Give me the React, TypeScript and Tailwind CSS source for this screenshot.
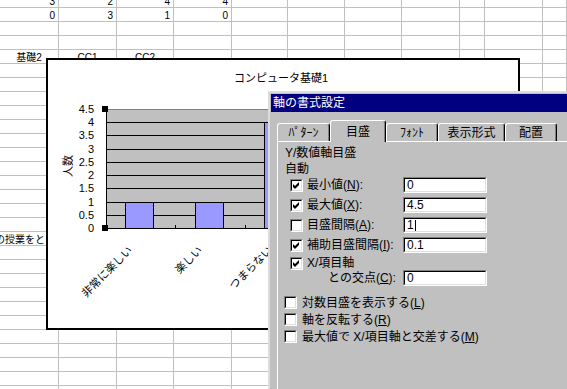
import clsx from "clsx";

const FONT = "font-['Liberation_Sans','Noto_Sans_CJK_JP',sans-serif]";

// column widths include the 1px right grid line
const COLS = [
    "w-[59px]",
    "w-[58px]",
    "w-[57px]",
    "w-[58px]",
    "w-[56px]",
    "w-[57px]",
    "w-[57px]",
    "w-[58px]",
    "w-[25px]",
    "w-[58px]",
    "flex-1",
];

type Cell = { text: string; align: "r" | "c" | "l" };

const CELLS: Record<string, Cell> = {
    "0-0": { text: "3", align: "r" },
    "0-1": { text: "2", align: "r" },
    "0-2": { text: "4", align: "r" },
    "0-3": { text: "4", align: "r" },
    "1-0": { text: "0", align: "r" },
    "1-1": { text: "3", align: "r" },
    "1-2": { text: "1", align: "r" },
    "1-3": { text: "0", align: "r" },
    "4-0": { text: "基礎2", align: "c" },
    "4-1": { text: "CC1", align: "c" },
    "4-2": { text: "CC2", align: "c" },
};

function Sheet() {
    const rows = Array.from({ length: 29 }, (_, i) => i);
    return (
        <div className="-mt-[6px]">
            {rows.map((r) => (
                <div key={r} className="flex h-[14px] border-b border-[#c0c0c0]">
                    {COLS.map((w, c) => {
                        const cell = CELLS[`${r}-${c}`];
                        return (
                            <div
                                key={c}
                                className={clsx(
                                    "h-full shrink-0 border-r border-[#c0c0c0] px-[3px] pt-[1px] text-[10px] leading-[14px] whitespace-nowrap text-black",
                                    w,
                                    cell?.align === "r" && "text-right",
                                    cell?.align === "c" && "text-center"
                                )}
                            >
                                {cell?.text}
                                {r === 17 && c === 0 && (
                                    <span className="-ml-[8px] block">の授業をとった</span>
                                )}
                            </div>
                        );
                    })}
                </div>
            ))}
        </div>
    );
}

function Chart() {
    const bottom = 168;
    const unit = 119 / 4.5;
    const ticks = [0, 0.5, 1, 1.5, 2, 2.5, 3, 3.5, 4, 4.5];
    const bars = [
        { x: 77, v: 1 },
        { x: 147, v: 1 },
        { x: 216, v: 4 },
    ];
    const cats = [
        { x: 85, label: "非常に楽しい" },
        { x: 155, label: "楽しい" },
        { x: 225, label: "つまらない" },
    ];

    return (
        <div className="absolute left-[46px] top-[58px] h-[272px] w-[474px] border-2 border-black bg-white">
            <svg
                width="470"
                height="268"
                className="block"
                fontFamily="'Liberation Sans','Noto Sans CJK JP',sans-serif"
                shapeRendering="crispEdges"
            >
                <text x="233" y="22" fontSize="11" textAnchor="middle">
                    コンピュータ基礎1
                </text>

                {/* plot area */}
                <rect x="58.5" y="49.5" width="320" height="119" fill="#c0c0c0" stroke="#808080" />
                {ticks.slice(1, -1).map((t) => {
                    const y = Math.round(bottom - t * unit) + 0.5;
                    return <line key={t} x1="58" x2="380" y1={y} y2={y} stroke="#000" />;
                })}

                {bars.map((b) => {
                    const top = Math.round(bottom - b.v * unit);
                    return (
                        <rect
                            key={b.x}
                            x={b.x + 0.5}
                            y={top + 0.5}
                            width="28"
                            height={bottom - top}
                            fill="#9999ff"
                            stroke="#000"
                        />
                    );
                })}

                {/* axes */}
                <line x1="58.5" x2="58.5" y1="49" y2="169" stroke="#000" />
                <line x1="58" x2="380" y1="168.5" y2="168.5" stroke="#000" />
                <line x1="127.5" x2="127.5" y1="165" y2="169" stroke="#000" />
                <line x1="197.5" x2="197.5" y1="165" y2="169" stroke="#000" />

                {/* selection handles */}
                <rect x="54" y="46" width="6" height="6" fill="#000" />
                <rect x="54" y="165" width="6" height="6" fill="#000" />

                {ticks.map((t) => (
                    <text
                        key={t}
                        x="46"
                        y={bottom - t * unit + 4}
                        fontSize="11"
                        textAnchor="end"
                    >
                        {t}
                    </text>
                ))}

                <text transform="translate(24,106) rotate(-90)" fontSize="11" textAnchor="middle">
                    人数
                </text>

                {cats.map((c) => (
                    <text
                        key={c.label}
                        transform={`translate(${c.x},191) rotate(-45)`}
                        fontSize="11"
                        textAnchor="end"
                    >
                        {c.label}
                    </text>
                ))}
            </svg>
        </div>
    );
}

function CheckBox({ checked }: { checked?: boolean }) {
    return (
        <span className="block h-[13px] w-[13px] shrink-0 border border-t-[#808080] border-l-[#808080] border-r-white border-b-white">
            <span className="block h-full w-full border border-t-black border-l-black border-r-[#dfdfdf] border-b-[#dfdfdf] bg-white">
                {checked && (
                    <svg width="9" height="9" className="block">
                        <polygon points="1,3 3,5 7,1 7,4 3,8 1,6" fill="#000" />
                    </svg>
                )}
            </span>
        </span>
    );
}

function Field({ value, caret }: { value: string; caret?: boolean }) {
    return (
        <div className="h-[16px] w-[84px] shrink-0 border border-t-[#808080] border-l-[#808080] border-r-white border-b-white">
            <div className="flex h-full items-center border border-t-black border-l-black border-r-[#dfdfdf] border-b-[#dfdfdf] bg-white pl-[2px] text-[12px] leading-[12px]">
                {value}
                {caret && <span className="ml-[1px] h-[11px] w-px bg-black" />}
            </div>
        </div>
    );
}

function Key({ k }: { k: string }) {
    return (
        <>
            (<span className="underline underline-offset-1">{k}</span>)
        </>
    );
}

function ScaleRow({
    checked,
    label,
    value,
    caret,
    className,
}: {
    checked: boolean;
    label: React.ReactNode;
    value: string;
    caret?: boolean;
    className?: string;
}) {
    return (
        <div className={clsx("flex h-[16px] items-center", className)}>
            <div className="flex w-[125px] items-center pl-[12px]">
                <CheckBox checked={checked} />
                <span className="ml-[4px] whitespace-nowrap">{label}</span>
            </div>
            <Field value={value} caret={caret} />
        </div>
    );
}

function Tab({ label, active, className }: { label: string; active?: boolean; className: string }) {
    return (
        <div
            className={clsx(
                "flex shrink-0 items-center justify-center rounded-t-[3px] border-x border-t border-l-white border-t-white border-r-black bg-[#c0c0c0] shadow-[inset_-1px_0_0_#808080]",
                active ? "relative z-10 h-[22px]" : "mb-[1px] h-[18px]",
                className
            )}
        >
            {label}
        </div>
    );
}

function AxisDialog() {
    return (
        <div
            className={clsx(
                "absolute left-[268px] top-[91px] h-[320px] w-[320px] border-l-2 border-t-2 border-[#dcdcdc] bg-[#c0c0c0] p-px text-[12px] text-black",
                FONT
            )}
        >
            <div className="flex h-[18px] items-center bg-[#000080] pl-[2px] leading-[18px] text-white">
                軸の書式設定
            </div>

            <div className="pl-[6px] pt-[8px]">
                <div className="flex h-[22px] items-end">
                    <Tab label="ﾊﾟﾀｰﾝ" className="w-[53px]" />
                    <Tab label="目盛" active className="w-[56px]" />
                    <Tab label="ﾌｫﾝﾄ" className="w-[52px]" />
                    <Tab label="表示形式" className="w-[67px]" />
                    <Tab label="配置" className="w-[52px]" />
                </div>

                <div className="-mt-px h-[260px] border-l border-t border-white pt-[3px] leading-[16px]">
                    <div className="h-[16px] pl-[7px]">Y/数値軸目盛</div>
                    <div className="h-[16px] pl-[7px]">自動</div>

                    <ScaleRow checked label={<>最小値<Key k="N" />:</>} value="0" />
                    <ScaleRow checked label={<>最大値<Key k="X" />:</>} value="4.5" className="mt-[4px]" />
                    <ScaleRow checked={false} label={<>目盛間隔<Key k="A" />:</>} value="1" caret className="mt-[4px]" />
                    <ScaleRow checked label={<>補助目盛間隔<Key k="I" />:</>} value="0.1" className="mt-[4px]" />

                    <div className="mt-[3px] flex h-[14px] items-center pl-[12px]">
                        <CheckBox checked />
                        <span className="ml-[4px]">X/項目軸</span>
                    </div>
                    <div className="flex h-[16px] items-center">
                        <div className="w-[125px] whitespace-nowrap pl-[50px]">
                            との交点<Key k="C" />:
                        </div>
                        <Field value="0" />
                    </div>

                    <div className="mt-[8px] flex flex-col">
                        {[
                            <>対数目盛を表示する<Key k="L" /></>,
                            <>軸を反転する<Key k="R" /></>,
                            <>最大値で X/項目軸と交差する<Key k="M" /></>,
                        ].map((label, i) => (
                            <div key={i} className="flex h-[17px] items-center pl-[6px]">
                                <CheckBox />
                                <span className="ml-[5px] whitespace-nowrap">{label}</span>
                            </div>
                        ))}
                    </div>
                </div>
            </div>
        </div>
    );
}

export default function App() {
    return (
        <div className={clsx("relative h-[389px] w-[567px] overflow-hidden bg-white", FONT)}>
            <Sheet />
            <Chart />
            <AxisDialog />
        </div>
    );
}
